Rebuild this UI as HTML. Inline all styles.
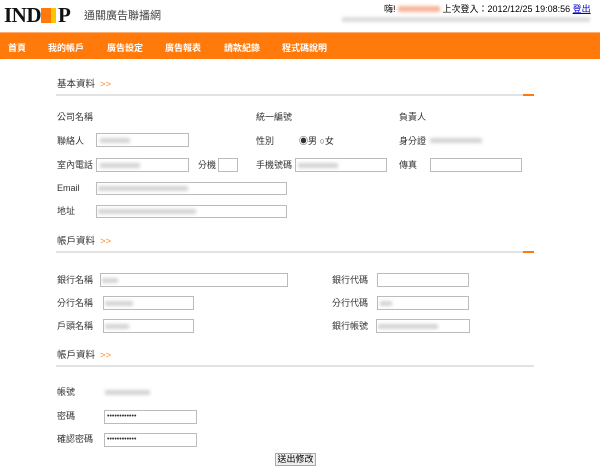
<!DOCTYPE html>
<html><head><meta charset="utf-8"><style>
*{margin:0;padding:0;box-sizing:border-box}
body{width:600px;height:475px;background:#fff;position:relative;overflow:hidden;font-family:"Liberation Sans","Noto Sans CJK TC",sans-serif;font-size:9px;color:#333}
.a{position:absolute;white-space:nowrap;line-height:12px}
.in{position:absolute;border:1px solid #bbb;background:#fff;height:15px}
.bl{position:absolute;background:#d4d4d4;filter:blur(1.5px);height:5px}
.nav{position:absolute;left:0;top:32px;width:600px;height:27px;background:#ff7a0a;border-top:1px solid #ffb070}
.nav span{position:absolute;top:8px;color:#fff;font-size:9px;font-weight:bold}
.sec{position:absolute;left:56px;width:478px;height:2px;background:#e2e2e2}
.sec i{position:absolute;right:0;top:0;width:11px;height:2px;background:#ff7a0a}
.t{font-size:9.5px;color:#333}
.t b{color:#ff8a2a;font-weight:normal;margin-left:5px}
</style></head><body>
<div class="a" style="left:4px;top:3px;font-family:'Liberation Serif',serif;font-size:21px;font-weight:bold;line-height:24px;color:#111;letter-spacing:-0.5px">IND<span style="display:inline-block;width:10px;height:15px;background:#ff7a0a;vertical-align:-1px"></span><span style="display:inline-block;width:5px;height:15px;background:#ffc400;vertical-align:-1px;margin-right:2px"></span>P</div>
<div class="a" style="left:84px;top:10px;font-size:11px;color:#444">通關廣告聯播網</div>
<div class="a" style="left:384px;top:3px;color:#000">嗨! <span style="display:inline-block;width:42px;height:6px;background:#f9b59a;filter:blur(1.5px)"></span> 上次登入：2012/12/25 19:08:56 <span style="color:#00c;text-decoration:underline">登出</span></div>
<div class="bl" style="left:342px;top:17px;width:248px;background:#dcdcdc"></div>
<div class="nav"><span style="left:8px">首頁</span><span style="left:48px">我的帳戶</span><span style="left:107px">廣告設定</span><span style="left:165px">廣告報表</span><span style="left:224px">請款紀錄</span><span style="left:282px">程式碼說明</span></div>

<div class="a t" style="left:57px;top:79px">基本資料<b>&gt;&gt;</b></div>
<div class="sec" style="top:94px"><i></i></div>
<div class="a" style="left:57px;top:111px">公司名稱</div>
<div class="a" style="left:256px;top:111px">統一編號</div>
<div class="a" style="left:399px;top:111px">負責人</div>
<div class="a" style="left:57px;top:135px">聯絡人</div>
<div class="in" style="left:96px;top:133px;width:93px;height:14px"></div><div class="bl" style="left:100px;top:138px;width:30px"></div>
<div class="a" style="left:256px;top:135px">性別</div>
<div class="a" style="left:299px;top:135px">◉男 ○女</div>
<div class="a" style="left:399px;top:135px">身分證</div><div class="bl" style="left:430px;top:138px;width:52px"></div>
<div class="a" style="left:57px;top:159px">室內電話</div>
<div class="in" style="left:96px;top:158px;width:93px;height:14px"></div><div class="bl" style="left:100px;top:163px;width:40px"></div>
<div class="a" style="left:198px;top:159px">分機</div><div class="in" style="left:218px;top:158px;width:20px;height:14px"></div>
<div class="a" style="left:256px;top:159px">手機號碼</div>
<div class="in" style="left:295px;top:158px;width:92px;height:14px"></div><div class="bl" style="left:298px;top:163px;width:40px"></div>
<div class="a" style="left:399px;top:159px">傳真</div><div class="in" style="left:430px;top:158px;width:92px;height:14px"></div>
<div class="a" style="left:57px;top:182px">Email</div>
<div class="in" style="left:96px;top:182px;width:191px;height:13px"></div><div class="bl" style="left:98px;top:186px;width:90px"></div>
<div class="a" style="left:57px;top:205px">地址</div>
<div class="in" style="left:96px;top:205px;width:191px;height:13px"></div><div class="bl" style="left:98px;top:209px;width:98px"></div>

<div class="a t" style="left:57px;top:236px">帳戶資料<b>&gt;&gt;</b></div>
<div class="sec" style="top:251px"><i></i></div>
<div class="a" style="left:57px;top:274px">銀行名稱</div>
<div class="in" style="left:100px;top:273px;width:188px;height:14px"></div><div class="bl" style="left:102px;top:278px;width:16px"></div>
<div class="a" style="left:332px;top:274px">銀行代碼</div><div class="in" style="left:377px;top:273px;width:92px;height:14px"></div>
<div class="a" style="left:57px;top:297px">分行名稱</div>
<div class="in" style="left:103px;top:296px;width:91px;height:14px"></div><div class="bl" style="left:105px;top:301px;width:28px"></div>
<div class="a" style="left:332px;top:297px">分行代碼</div><div class="in" style="left:377px;top:296px;width:92px;height:14px"></div><div class="bl" style="left:380px;top:301px;width:12px"></div>
<div class="a" style="left:57px;top:320px">戶頭名稱</div>
<div class="in" style="left:103px;top:319px;width:91px;height:14px"></div><div class="bl" style="left:105px;top:324px;width:24px"></div>
<div class="a" style="left:332px;top:320px">銀行帳號</div><div class="in" style="left:376px;top:319px;width:94px;height:14px"></div><div class="bl" style="left:378px;top:324px;width:60px"></div>

<div class="a t" style="left:57px;top:350px">帳戶資料<b>&gt;&gt;</b></div>
<div class="sec" style="top:365px"></div>
<div class="a" style="left:57px;top:386px">帳號</div><div class="bl" style="left:105px;top:390px;width:45px"></div>
<div class="a" style="left:57px;top:410px">密碼</div>
<div class="in" style="left:104px;top:410px;width:93px;height:14px;font-size:7px;line-height:11px;padding-left:2px">••••••••••••</div>
<div class="a" style="left:57px;top:433px">確認密碼</div>
<div class="in" style="left:104px;top:433px;width:93px;height:14px;font-size:7px;line-height:11px;padding-left:2px">••••••••••••</div>
<div class="a" style="left:275px;top:453px;width:41px;height:13px;border:1px solid #aaa;background:#eee;text-align:center;line-height:11px;color:#000">送出修改</div>
</body></html>
